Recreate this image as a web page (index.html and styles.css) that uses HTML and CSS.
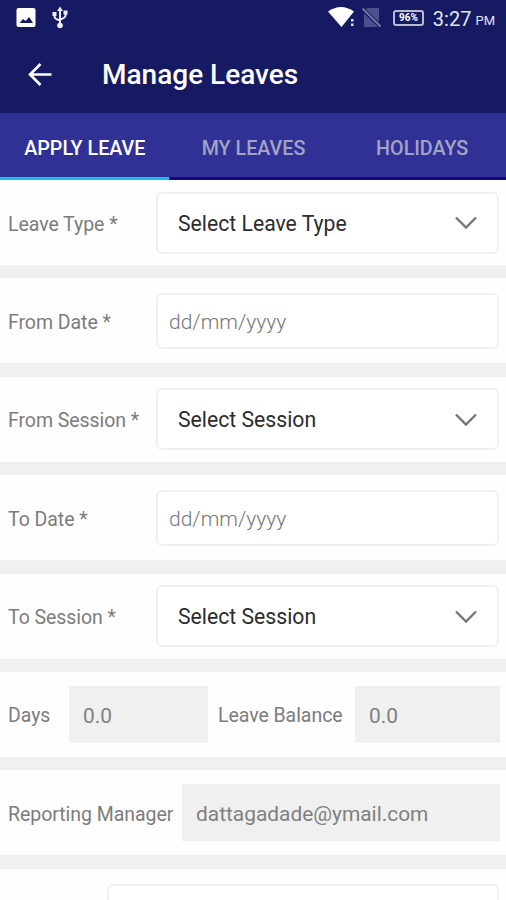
FILE: index.html
```
<!DOCTYPE html>
<html lang="en">
<head>
<meta charset="utf-8">
<title>Manage Leaves</title>
<link rel="stylesheet" href="styles.css">
</head>
<body>
<div class="screen">
  <header class="header">
    <div class="status">
      <svg class="status-left" width="56" height="36" viewBox="0 0 56 36">
        <rect x="0.5" y="8" width="19" height="19" rx="2" fill="#fff"/>
        <path d="M3.5 23l3.600-4 2.600 2 3.400-4 4 6z" fill="#161a63"/>
        <g fill="none" stroke="#eef" stroke-width="2">
          <path d="M44 10v15M38.500 13v3.500q0 2.500 5.500 4M49.500 12v3.500q0 2.500-5.500 4"/>
        </g>
        <path d="M44 6.500l3 4.500h-6zM36.500 12h4v4h-4zM47.500 10.500h4v4h-4z" fill="#eef"/>
        <circle cx="44" cy="25.500" r="2.800" fill="#eef"/>
      </svg>
      <div class="status-right">
        <svg width="54" height="36" viewBox="0 0 54 36">
          <path d="M-1 11.500Q12 2.500 25 11.500L12.500 27z" fill="#fff"/>
          <path d="M21 18h4v9h-4z" fill="#161a63"/>
          <path d="M22 19h2.500v2.500H22zM22 23.500h2.500V26H22z" fill="#dde"/>
          <path d="M38 8h12v19H35V12z" fill="#4d508f"/>
          <path d="M33 8.500l19 18.500" stroke="#161a63" stroke-width="4"/>
          <path d="M33.500 8.500l18 18" stroke="#777aa6" stroke-width="1.800"/>
        </svg>
        <span class="battery">96%</span>
        <span class="clock">3:27</span>
        <span class="meridiem">PM</span>
      </div>
    </div>
    <div class="appbar">
      <svg class="back" width="24" height="24" viewBox="0 0 24 24"><path d="M23.500 11.500H2.500M12.500 1L2 11.500 12.500 22"/></svg>
      <h1 class="title">Manage Leaves</h1>
    </div>
  </header>
  <nav class="tabs">
    <a class="tab active">APPLY LEAVE</a>
    <a class="tab">MY LEAVES</a>
    <a class="tab">HOLIDAYS</a>
  </nav>
  <main class="form">
    <div class="row"><label class="label">Leave Type *</label><div class="box select"><span>Select Leave Type</span><svg class="chevron" width="22" height="14" viewBox="0 0 22 14"><path d="M1 1.500l10 10 10-10"/></svg></div></div>
    <div class="row"><label class="label">From Date *</label><div class="box date">dd/mm/yyyy</div></div>
    <div class="row"><label class="label">From Session *</label><div class="box select"><span>Select Session</span><svg class="chevron" width="22" height="14" viewBox="0 0 22 14"><path d="M1 1.500l10 10 10-10"/></svg></div></div>
    <div class="row"><label class="label">To Date *</label><div class="box date">dd/mm/yyyy</div></div>
    <div class="row"><label class="label">To Session *</label><div class="box select"><span>Select Session</span><svg class="chevron" width="22" height="14" viewBox="0 0 22 14"><path d="M1 1.500l10 10 10-10"/></svg></div></div>
    <div class="row row-days"><label class="label">Days</label><div class="readonly">0.0</div><label class="label">Leave Balance</label><div class="readonly">0.0</div></div>
    <div class="row row-manager"><label class="label">Reporting Manager</label><div class="readonly">dattagadade@ymail.com</div></div>
    <div class="row row-last"><div class="box"></div></div>
  </main>
</div>
</body>
</html>
```

FILE: styles.css
```
* { box-sizing: border-box; }
body { margin: 0; font-family: Roboto, "Liberation Sans", sans-serif; }
.screen { width: 506px; height: 900px; overflow: hidden; background: #fefefe; }

.header { height: 113px; background: #161a63; color: #fff; }
.status { display: flex; justify-content: space-between; height: 36px; padding: 0 11px 0 16px; }
.status-right { display: flex; align-items: center; height: 36px; color: #e4e4f0; }
.status-right svg { overflow: visible; }
.battery {
  width: 31px; height: 16px; margin-left: 10px;
  border: 2px solid #b9bad6; border-radius: 3px;
  font-size: 10px; font-weight: 700; line-height: 12px; text-align: center; color: #fff;
}
.clock { margin: 1px 0 0 9px; font-size: 20px; }
.meridiem { margin: 5px 0 0 4px; font-size: 13px; }
.appbar { display: flex; align-items: center; height: 77px; padding-left: 28px; }
.back { fill: none; stroke: #fff; stroke-width: 2.600; }
.title { margin: 0 0 0 50px; font-size: 28px; font-weight: 500; line-height: 36px; }

.tabs { display: grid; grid-template-columns: repeat(3, 1fr); height: 67px; background: #2f3194; }
.tab {
  display: flex; align-items: center; justify-content: center;
  padding: 6px 0 0 1px; border-bottom: 3px solid #10087e;
  font-size: 19.700px; font-weight: 500; color: #a3a3c4; white-space: nowrap;
}
.tab.active { color: #fff; border-bottom-color: #1cbde9; }

.form { display: flex; flex-direction: column; gap: 13.400px; background: #f0f0f0; }
.row { display: flex; flex: none; align-items: center; height: 85px; padding: 0 7px 0 8px; background: #fefefe; }
.label { flex: none; width: 148px; padding-top: 3px; font-size: 19.500px; font-weight: 400; letter-spacing: -0.050px; color: #7c7c7c; white-space: nowrap; }
.box { flex: 1; display: flex; align-items: center; border: 2px solid #f0f0f0; border-radius: 6px; background: #fff; font-size: 21.200px; }
.select { height: 62px; justify-content: space-between; padding: 1px 20px 0; color: #2c2c2c; }
.date { height: 56px; padding: 2px 0 0 11px; font-size: 21px; font-weight: 300; color: #777; }
.chevron { fill: none; stroke: #777; stroke-width: 2.400; }
.readonly { display: flex; align-items: center; height: 57px; padding: 3px 14px 0; background: #f0f0f0; font-size: 20.900px; color: #808080; }

.row-days { display: grid; grid-template-columns: 61px 139px 147px 145px; padding: 0 6px 0 8px; }
.row-days .label { width: auto; }
.row-days .label:nth-of-type(2) { padding-left: 10px; }
.row-manager { padding-right: 6px; }
.row-manager .label { width: 174px; }
.row-manager .readonly { flex: 1; }
.row-last { padding: 15px 7px 0 107px; }
.row-last .box { height: 70px; }
```
